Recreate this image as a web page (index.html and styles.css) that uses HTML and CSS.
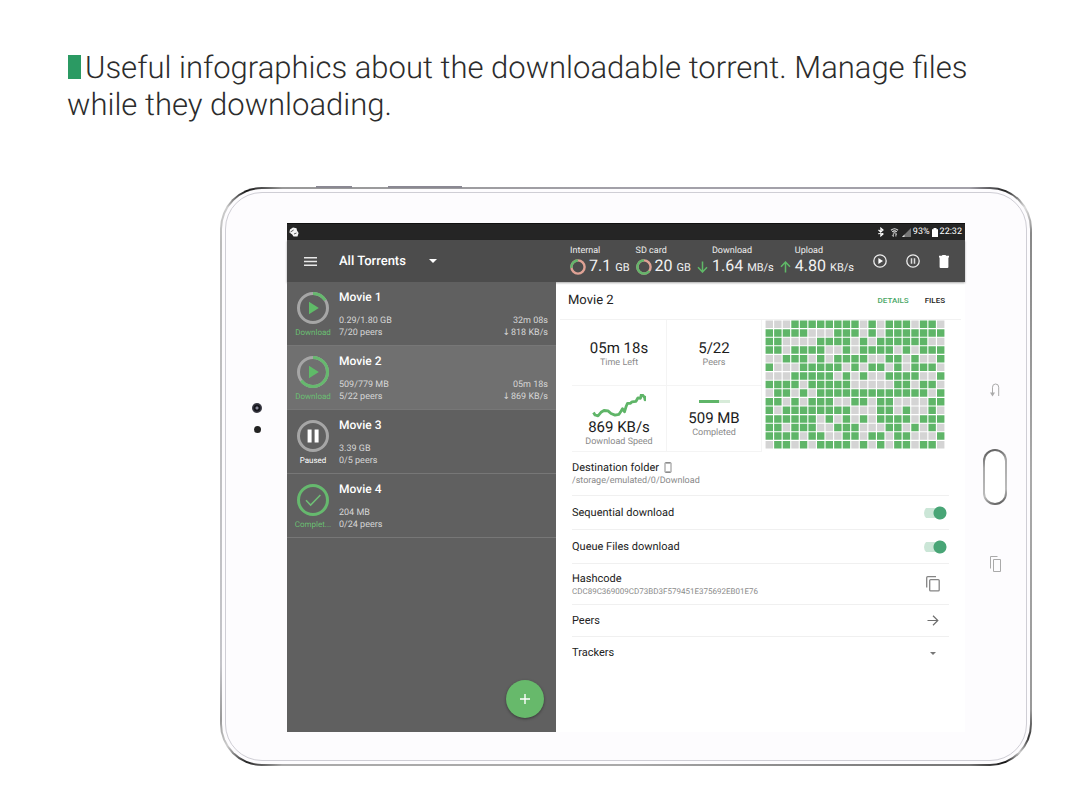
FILE: index.html
```html
<!DOCTYPE html>
<html lang="en">
<head>
<meta charset="utf-8">
<title>Torrent manager</title>
<link rel="stylesheet" href="styles.css">
</head>
<body>
<header class="promo">
  <h1 class="promo-title"><span class="promo-mark"></span>Useful infographics about the downloadable torrent. Manage files while they downloading.</h1>
</header>
<main class="tablet">
  <span class="side-key key-short"></span>
  <span class="side-key key-long"></span>
  <div class="bezel bezel-left">
    <span class="lens lens-large"></span>
    <span class="lens"></span>
  </div>
  <div class="screen">
    <div class="status-bar">
      <svg class="status-logo" width="10" height="10" viewBox="0 0 10 10"><path d="M1 2.5 4 .6l3.500.6L8 3.500 9.600 6 8.500 9.400 4.500 9.500 3.200 7.600.4 5.600z" fill="#f4f4f4"/><path d="M1.500 5 4.600 3M5 7l2.500-1" stroke="#333" stroke-width=".8"/></svg>
      <div class="status-right">
        <svg width="8" height="10" viewBox="0 0 8 10"><path d="M1.500 3 6 6.900 3.900 8.800V1.200L6 3.100 1.500 7" fill="none" stroke="#fff" stroke-width="1.200"/></svg>
        <svg class="wifi" width="9" height="10" viewBox="0 0 9 10"><path d="M1 3.200Q4.500.4 8 3.200M2.200 4.800q2.300-1.900 4.600 0M3.400 6.200q1.100-.9 2.200 0" fill="none" stroke="#e4e4e4" stroke-width="1.100"/><path d="M3.300 6.500v3M2.200 8.300l1.100 1.200M5.900 9.500v-3M7 7.600 5.900 6.500" stroke="#ddd" stroke-width=".9" fill="none"/></svg>
        <svg width="9" height="9" viewBox="0 0 9 9"><path d="M9 0v9H0z" fill="#777"/><path d="M0 9 2.500 6.500V9z" fill="#ddd"/></svg>
        <span>93%</span>
        <svg width="6" height="9" viewBox="0 0 6 9"><path d="M0 1.200h1.500V0h3v1.200H6V9H0z" fill="#fff"/></svg>
        <span>22:32</span>
      </div>
    </div>
    <div class="toolbar">
      <div class="toolbar-nav">
        <button class="icon-button menu-button" aria-label="Menu"><svg width="13" height="9" viewBox="0 0 13 9"><path d="M0 .8h13M0 4.500h13M0 8.200h13" stroke="#e8e8e8" stroke-width="1.400"/></svg></button>
        <div class="filter">
          <select class="filter-select" aria-label="Filter"><option>All Torrents</option></select>
          <svg class="filter-caret" width="8" height="4" viewBox="0 0 8 4"><path d="M0 0h8L4 4z" fill="#fff"/></svg>
        </div>
      </div>
      <div class="toolbar-stats">
        <div class="meter">
          <span class="meter-label">Internal</span>
          <span class="meter-value"><svg width="16" height="16" viewBox="0 0 16 16"><circle cx="8" cy="8" r="6.600" class="ring-pink"/><circle cx="8" cy="8" r="6.600" class="ring-used" pathLength="100" stroke-dasharray="27 73" transform="rotate(173 8 8)"/></svg>7.1 <small>GB</small></span>
        </div>
        <div class="meter">
          <span class="meter-label">SD card</span>
          <span class="meter-value"><svg width="16" height="16" viewBox="0 0 16 16"><circle cx="8" cy="8" r="6.600" class="ring-pink"/><circle cx="8" cy="8" r="6.600" class="ring-used" pathLength="100" stroke-dasharray="65 35" transform="rotate(36 8 8)"/></svg>20 <small>GB</small></span>
        </div>
        <div class="rate">
          <svg width="11" height="12" viewBox="0 0 11 12"><path d="M5.500.5v10.300M1 6.300l4.500 4.700L10 6.300" class="green-line"/></svg>
          <div class="meter"><span class="meter-label">Download</span><span class="meter-value">1.64 <small>MB/s</small></span></div>
        </div>
        <div class="rate">
          <svg width="11" height="12" viewBox="0 0 11 12"><path d="M5.500 11.500V1.200M1 5.700 5.500 1 10 5.700" class="green-line"/></svg>
          <div class="meter"><span class="meter-label">Upload</span><span class="meter-value">4.80 <small>KB/s</small></span></div>
        </div>
      </div>
      <div class="toolbar-actions">
        <button class="icon-button" aria-label="Resume all"><svg width="14" height="14" viewBox="0 0 14 14"><circle cx="7" cy="7" r="6.200" class="white-ring"/><path d="M5.400 3.900v6.200L10 7z" fill="#fff"/></svg></button>
        <button class="icon-button" aria-label="Pause all"><svg width="14" height="14" viewBox="0 0 14 14"><circle cx="7" cy="7" r="6.200" class="white-ring"/><path d="M5.500 4.200v5.600M8.500 4.200v5.600" stroke="#ddd" stroke-width="1.500"/></svg></button>
        <button class="icon-button" aria-label="Delete"><svg width="10" height="13" viewBox="0 0 10 13"><path d="M0 .8h2.800L3.500 0h3l.7.8H10v1.600H0zM.6 2.400h8.800V12q0 1-1 1H1.600q-1 0-1-1z" fill="#fff"/></svg></button>
      </div>
    </div>
    <div class="content">
      <section class="list">
        <article class="torrent">
          <div class="state">
            <svg width="32" height="32" viewBox="0 0 32 32"><circle cx="16" cy="16" r="14.500" class="track"/><circle cx="16" cy="16" r="14.500" class="progress" pathLength="100" stroke-dasharray="16 84" transform="rotate(-90 16 16)"/><path d="M12 9.700v12.600L21.800 16z" fill="#5fbb68"/></svg>
            <span>Download</span>
          </div>
          <div class="info"><h2>Movie 1</h2><p><span>0.29/1.80 GB</span><span>32m 08s</span></p><p><span>7/20 peers</span><span><i class="down">↓</i>818 KB/s</span></p></div>
        </article>
        <article class="torrent selected">
          <div class="state">
            <svg width="32" height="32" viewBox="0 0 32 32"><circle cx="16" cy="16" r="14.500" class="track"/><circle cx="16" cy="16" r="14.500" class="progress" pathLength="100" stroke-dasharray="65 35" transform="rotate(-90 16 16)"/><path d="M12 9.700v12.600L21.800 16z" fill="#5fbb68"/></svg>
            <span>Download</span>
          </div>
          <div class="info"><h2>Movie 2</h2><p><span>509/779 MB</span><span>05m 18s</span></p><p><span>5/22 peers</span><span><i class="down">↓</i>869 KB/s</span></p></div>
        </article>
        <article class="torrent">
          <div class="state paused">
            <svg width="32" height="32" viewBox="0 0 32 32"><circle cx="16" cy="16" r="14.500" class="track"/><path d="M10.600 9.600h4v12.800h-4zM17.600 9.600h4v12.800h-4z" fill="#fff"/></svg>
            <span>Paused</span>
          </div>
          <div class="info"><h2>Movie 3</h2><p><span>3.39 GB</span></p><p><span>0/5 peers</span></p></div>
        </article>
        <article class="torrent">
          <div class="state">
            <svg width="32" height="32" viewBox="0 0 32 32"><circle cx="16" cy="16" r="14.500" class="progress"/><path d="M9 16.300l4.600 4.800L23.400 11" fill="none" stroke="#6fbf76" stroke-width="1.500"/></svg>
            <span>Complet...</span>
          </div>
          <div class="info"><h2>Movie 4</h2><p><span>204 MB</span></p><p><span>0/24 peers</span></p></div>
        </article>
        <button class="add-button" aria-label="Add torrent"><svg width="10" height="10" viewBox="0 0 10 10"><path d="M5 0v10M0 5h10" stroke="#fff" stroke-width="1.400"/></svg></button>
      </section>
      <section class="details">
        <div class="details-head">
          <h2>Movie 2</h2>
          <button class="tab active">DETAILS</button>
          <button class="tab">FILES</button>
        </div>
        <div class="overview">
          <div class="tiles">
            <div class="tile"><strong>05m 18s</strong><span>Time Left</span></div>
            <div class="tile"><strong>5/22</strong><span>Peers</span></div>
            <div class="tile tile-chart">
              <svg width="54" height="24" viewBox="0 0 54 24"><path d="M1.500 18.500 3 21l3 .8 3-3.500 3-1.800 4 .4 3 2.600 4 1.600 4-.8 2-3 1.500-2.500 2 3 1.500-5 1.500-3.500h3l1.500-1.500 4-.5 2-3.500 2.500.5 1-4.500 3 3.500.5 2.500 1.500-3.500" fill="none" stroke="#5fb568" stroke-width="2.800" stroke-linejoin="round"/></svg>
              <strong>869 KB/s</strong><span>Download Speed</span>
            </div>
            <div class="tile"><progress class="bar" value="65" max="100" aria-label="Completed"></progress><strong>509 MB</strong><span>Completed</span></div>
          </div>
          <svg class="pieces" id="pieces" viewBox="0 0 189 135" preserveAspectRatio="none" role="img" aria-label="Pieces"><path class="missing" id="missing"/><path class="loaded" id="loaded"/></svg>
        </div>
        <div class="row row-folder">
          <div class="row-text"><h3>Destination folder <svg width="8" height="11" viewBox="0 0 8 11"><path d="M1.500.5h5q.5 0 .5.5v9q0 .5-.5.5h-5q-.5 0-.5-.5v-9q0-.5.5-.5z" fill="none" stroke="#8c8c8c"/><path d="M1 1.500h6M1 9.500h6" stroke="#b5b5b5"/></svg></h3><p>/storage/emulated/0/Download</p></div>
        </div>
        <label class="row row-switch"><span>Sequential download</span><input class="switch" type="checkbox" role="switch" checked></label>
        <label class="row row-switch"><span>Queue Files download</span><input class="switch" type="checkbox" role="switch" checked></label>
        <div class="row row-hash">
          <div class="row-text"><h3>Hashcode</h3><p class="hash">CDC89C369009CD73BD3F579451E375692EB01E76</p></div>
          <button class="icon-button row-icon" aria-label="Copy hashcode"><svg width="14" height="16" viewBox="0 0 14 16"><path d="M.7 11.500V1.700q0-1 1-1H10M4.700 3.600h7.500q1 0 1 1v9.300q0 1-1 1H4.700q-1 0-1-1V4.600q0-1 1-1z" fill="none" stroke="#858585" stroke-width="1.300"/></svg></button>
        </div>
        <button class="row row-link"><span>Peers</span><span class="row-icon"><svg width="12" height="11" viewBox="0 0 12 11"><path d="M.5 5.500h10.300M6 .8l4.800 4.700L6 10.200" fill="none" stroke="#6e6e6e" stroke-width="1.200"/></svg></span></button>
        <button class="row row-link"><span>Trackers</span><span class="row-icon"><svg width="6" height="3" viewBox="0 0 6 3"><path d="M0 0h6L3 3z" fill="#777"/></svg></span></button>
      </section>
    </div>
  </div>
  <div class="bezel bezel-right">
    <svg width="10" height="15" viewBox="0 0 10 15"><path d="M2.500 12V4.200Q2.500 1 5.600 1T8.700 4.200V13" fill="none" stroke="#aaa"/><path d="M0 9.500h5L2.500 13.500z" fill="#aaa"/></svg>
    <button class="home-key" aria-label="Home"></button>
    <svg width="11" height="16" viewBox="0 0 11 16"><path d="M.5 12.500V.5h7M3.500 3.500h7v12h-7z" fill="none" stroke="#aaa"/></svg>
  </div>
</main>
<script src="pieces.js"></script>
</body>
</html>
```
FILE: pieces.js
```js
// One character per piece: G is downloaded, a dot is missing.
const rows = [
  "...GGGGGGGG.G.GGG.GG.",
  "GGGGG...GGG.G.GGGGGGG",
  "GG....GGGG.G.GGGGGG..",
  "GG.GGGG..G.GGGG.G.GGG",
  "..GGG.G.GGGG..GG.G..G",
  "G...GGGGG.G.GG.G.GGG.",
  "...GGGGG.G.G..GGGG..G",
  "GGGG.GGGGG.....GG.GG.",
  ".GG.G.GGGGGGGGGGGGG.G",
  "GG.G.GGG..GG.GG....GG",
  "G.GGGGGGGG...GG.G..G.",
  "GGGGGG.G.G.G.GGGG.GGG",
  "GG.GGG..GGG...GG.G.G.",
  "GGGG.GG..GG.GG.GG...G",
  ".GG.G.GGGG.G.G.GG.GG."
];
const paths = { G: "", ".": "" };
rows.forEach((row, y) => [...row].forEach((piece, x) => {
  paths[piece] += `M${x * 9 + 0.6} ${y * 9 + 0.6}h7.800v7.800h-7.800z`;
}));
document.getElementById("loaded").setAttribute("d", paths.G);
document.getElementById("missing").setAttribute("d", paths["."]);
```
FILE: styles.css
```css
* { box-sizing: border-box; }
body { margin: 0; background: #fff; color: #222; font-family: Roboto, "Liberation Sans", sans-serif; text-rendering: geometricPrecision; }
h1, h2, h3, p { margin: 0; font-weight: 400; }
button { border: 0; padding: 0; background: none; font: inherit; color: inherit; }
svg { display: block; flex: none; }

.promo { padding: 49px 67px 64px; }
.promo-title { font-size: 31px; line-height: 37px; font-weight: 300; color: #2c2c2c; }
.promo-mark { display: inline-block; width: 13px; height: 24px; margin: 0 4px 0 1px; vertical-align: -1px; background: #2b9a63; }

.tablet {
  position: relative;
  display: grid;
  grid-template-columns: 65px minmax(0, 1fr) 65px;
  margin: 0 35px 34px 220px;
  padding: 34px 0 32px;
  border: 2px solid transparent;
  border-radius: 42px;
  background:
    linear-gradient(#fdfcfe, #fdfcfe) padding-box,
    conic-gradient(#a3a1a9 0deg, #a3a1a9 50deg, #222 53deg, #ddd 56deg, #888 59deg, #aaa 90deg, #999 120deg, #333 123deg, #ccc 125deg, #111 127deg, #777 130deg, #aaa 180deg, #aaa 230deg, #222 233deg, #ccc 236deg, #999 239deg, #c4c4c9 245deg, #bbb 300deg, #ccc 304deg, #111 307deg, #999 310deg, #a3a1a9 360deg) border-box;
}
.tablet::before { content: ""; position: absolute; inset: 3px; border: 1px solid #cfced5; border-radius: 37px; pointer-events: none; }
.side-key { position: absolute; top: -3px; height: 2px; background: #8a8892; }
.key-short { left: 94px; width: 36px; }
.key-long { left: 166px; width: 74px; }
.bezel { display: flex; flex-direction: column; align-items: center; justify-content: center; }
.bezel-left { gap: 13px; padding: 0 0 120px 5px; }
.bezel-right { gap: 51px; padding-right: 5px; }
.lens { width: 7px; height: 7px; border-radius: 50%; background: #222; }
.lens-large { width: 10px; height: 10px; background: radial-gradient(#88889a 0 1px, #15151c 2px 3px, #3a3a44 4px); }
.home-key { width: 24px; height: 56px; border: 2px solid transparent; border-radius: 12px; background: linear-gradient(#fff, #fff) padding-box, linear-gradient(160deg, #555, #777 15%, #aaa 30%, #bbb 75%, #444) border-box; }

.screen { display: flex; flex-direction: column; min-height: 509px; background: #fff; }
.status-bar { display: flex; align-items: center; justify-content: space-between; height: 17px; padding: 0 3px 0 2px; background: #252525; border-top: 1px solid #111; color: #fff; font-size: 9px; line-height: 12px; }
.status-right { display: flex; align-items: center; gap: 2px; }
.wifi { margin: 0 1px 0 3px; }

.toolbar { position: relative; display: flex; align-items: center; height: 42px; background: #4c4c4c; color: #fff; box-shadow: 0 1px 2px rgba(0, 0, 0, .35); }
.toolbar-nav { display: flex; align-items: center; flex: 1; padding-left: 17px; }
.icon-button { display: flex; align-items: center; justify-content: center; }
.menu-button { margin-right: 22px; }
.filter { display: flex; align-items: center; }
.filter-select { appearance: none; width: 90px; border: 0; padding: 2px 0 0; background: transparent; color: #fff; font: 500 13px/18px Roboto, "Liberation Sans", sans-serif; text-rendering: inherit; }
.toolbar-stats { display: flex; flex: none; gap: 6px; }
.meter { display: flex; flex-direction: column; white-space: nowrap; }
.meter-label { font-size: 9px; line-height: 12px; color: #eee; }
.meter-value { display: flex; align-items: baseline; gap: 3px; font-size: 16px; line-height: 18px; color: #f2f2f2; }
.meter-value svg { align-self: center; }
.meter-value small { margin-left: 1px; font-size: 11px; }
.rate { display: flex; align-items: flex-end; gap: 4px; }
.rate > svg { margin-bottom: 4px; }
.ring-pink { fill: none; stroke: #dfa295; stroke-width: 2.400; }
.ring-used { fill: none; stroke: #63b66b; stroke-width: 2.400; }
.green-line { fill: none; stroke: #5fb867; stroke-width: 1.500; }
.white-ring { fill: none; stroke: #eee; stroke-width: 1.300; }
.toolbar-actions { display: flex; align-items: center; gap: 19px; padding: 0 16px 0 19px; }

.content { display: grid; flex: 1; grid-template-columns: 269fr 409fr; }
.list { position: relative; background: #606060; color: #fff; }
.torrent { display: flex; height: 64px; padding: 8px 8px 0 5px; border-bottom: 1px solid #777; }
.torrent.selected { background: #707070; }
.state { display: flex; flex: none; flex-direction: column; align-items: center; width: 42px; padding-top: 2px; color: #6abf72; font-size: 8px; line-height: 10px; }
.state span { margin-top: 4px; }
.state.paused { color: #fff; }
.track, .progress { fill: none; stroke: #a6a6a6; stroke-width: 3; }
.progress { stroke: #66b96e; }
.info { flex: 1; padding-left: 5px; }
.info h2 { margin-bottom: 11px; font-size: 12px; line-height: 14px; font-weight: 500; }
.info p { display: flex; justify-content: space-between; color: #d6d6d6; font-size: 9px; line-height: 12px; }
.down { margin-right: 1px; font-style: normal; font-family: "DejaVu Sans", sans-serif; line-height: 10px; }
.add-button { position: absolute; right: 12px; bottom: 14px; display: flex; align-items: center; justify-content: center; width: 38px; height: 38px; border-radius: 50%; background: #67b96b; box-shadow: 0 1px 3px rgba(0, 0, 0, .4); }

.details { display: flex; flex-direction: column; padding: 0 16px; }
.details-head { display: flex; align-items: center; height: 38px; margin: 0 -12px; padding: 0 16px 0 8px; border-bottom: 1px solid #f2f2f2; }
.details-head h2 { flex: 1; font-size: 13px; line-height: 16px; color: #222; }
.tab { margin-left: 16px; font-size: 8px; line-height: 12px; font-weight: 500; }
.tab.active { color: #4aa766; }
.overview { display: grid; grid-template-columns: minmax(0, 190fr) minmax(0, 180fr); gap: 3px; height: 132px; margin-right: 4px; }
.tiles { display: grid; grid-template: 1fr 1fr / 1fr 1fr; }
.tile { display: flex; flex-direction: column; align-items: center; justify-content: center; padding-top: 3px; border-right: 1px solid #f4f4f4; border-bottom: 1px solid #f4f4f4; white-space: nowrap; }
.tile-chart { padding-top: 5px; }
.tile strong { font-size: 15px; line-height: 18px; font-weight: 400; color: #1c1c1c; }
.tile span { font-size: 9px; line-height: 13px; color: #8a8a8a; }
.bar { appearance: none; width: 31px; height: 3px; margin-bottom: 6px; border: 0; background: #d7ebd9; }
.bar::-webkit-progress-bar { background: #d7ebd9; }
.bar::-webkit-progress-value { background: #5fb568; }
.pieces { width: 100%; height: 129px; }
.missing { fill: #d4d4d4; }
.loaded { fill: #5fb568; }
.row { display: flex; align-items: center; justify-content: space-between; width: 100%; border-bottom: 1px solid #f0f0f0; font-size: 11px; line-height: 14px; color: #222; text-align: left; }
.row:last-child { border-bottom: 0; }
.row h3 { display: flex; align-items: center; gap: 5px; font-size: 11px; line-height: 14px; }
.row p { font-size: 9px; line-height: 12px; color: #8a8a8a; }
.row .hash { font-size: 8px; line-height: 11px; }
.row-folder { height: 44px; }
.row-switch { height: 34px; padding-right: 2px; }
.row-hash { height: 41px; }
.row-link { height: 32px; }
.row-icon { display: flex; justify-content: center; width: 14px; margin-right: 9px; }
.switch { appearance: none; flex: none; width: 23px; height: 14px; margin: 0; background: radial-gradient(circle at 16px 7px, #48a576 0 6px, transparent 7px), linear-gradient(#cbe6d7, #cbe6d7) 0 2px / 18px 10px no-repeat; border-radius: 7px; }
```
